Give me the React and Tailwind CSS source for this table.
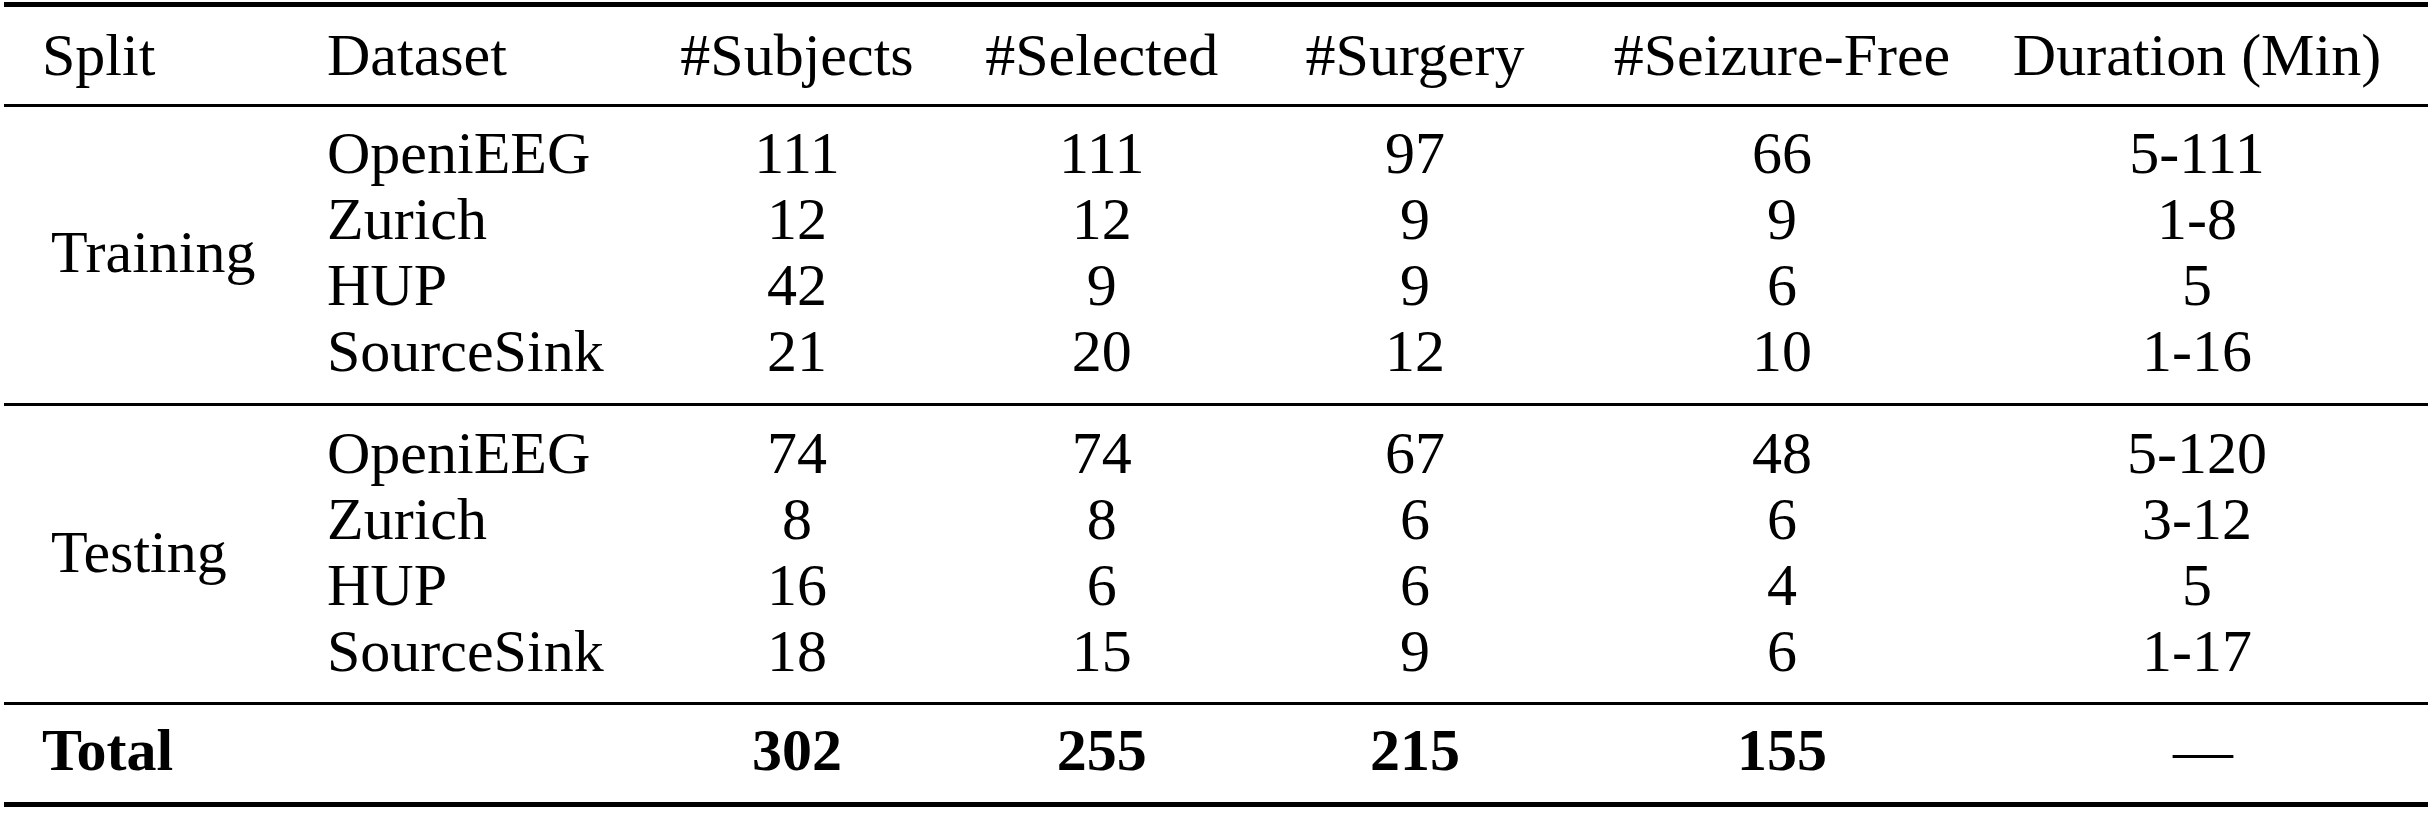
import React from "react";

const COLS =
  "grid grid-cols-[285px_313.5px_313px_296.5px_330px_404px_426px] pl-[38px]";

const training = [
  ["OpeniEEG", "111", "111", "97", "66", "5-111"],
  ["Zurich", "12", "12", "9", "9", "1-8"],
  ["HUP", "42", "9", "9", "6", "5"],
  ["SourceSink", "21", "20", "12", "10", "1-16"],
];

const testing = [
  ["OpeniEEG", "74", "74", "67", "48", "5-120"],
  ["Zurich", "8", "8", "6", "6", "3-12"],
  ["HUP", "16", "6", "6", "4", "5"],
  ["SourceSink", "18", "15", "9", "6", "1-17"],
];

function Group({ label, rows, pt, pb }) {
  return (
    <div className={`${COLS} grid-rows-[66px_66px_66px_66px] ${pt} ${pb}`}>
      <div className="row-span-4 row-start-1 col-start-1 flex items-center pl-[9px]">
        {label}
      </div>
      {rows.map((r, i) =>
        r.map((c, j) => (
          <div
            key={`${i}-${j}`}
            className={j === 0 ? "text-left whitespace-nowrap" : "text-center whitespace-nowrap"}
            style={{ gridRowStart: i + 1, gridColumnStart: j + 2 }}
          >
            {c}
          </div>
        ))
      )}
    </div>
  );
}

export default function App() {
  return (
    <div className="w-[2432px] h-[820px] bg-white pt-[2px] px-[4px] font-['Liberation_Serif',serif] text-[60px] leading-[66px] text-black">
      <div className="border-t-[5px] border-black">
        <div className={`${COLS} pt-[15px] pb-[16px]`}>
          <div className="text-left">Split</div>
          <div className="text-left">Dataset</div>
          <div className="text-center whitespace-nowrap">#Subjects</div>
          <div className="text-center whitespace-nowrap">#Selected</div>
          <div className="text-center whitespace-nowrap">#Surgery</div>
          <div className="text-center whitespace-nowrap">#Seizure-Free</div>
          <div className="text-center whitespace-nowrap">Duration (Min)</div>
        </div>
        <div className="border-t-[3px] border-black">
          <Group label="Training" rows={training} pt="pt-[13px]" pb="pb-[19px]" />
        </div>
        <div className="border-t-[3px] border-black">
          <Group label="Testing" rows={testing} pt="pt-[14px]" pb="pb-[18px]" />
        </div>
        <div className="border-t-[3px] border-black border-b-[5px]">
          <div className={`${COLS} pt-[12px] pb-[19px] font-bold`}>
            <div className="text-left">Total</div>
            <div></div>
            <div className="text-center">302</div>
            <div className="text-center">255</div>
            <div className="text-center">215</div>
            <div className="text-center">155</div>
            <div className="text-center font-normal pl-[12px]">—</div>
          </div>
        </div>
      </div>
    </div>
  );
}
